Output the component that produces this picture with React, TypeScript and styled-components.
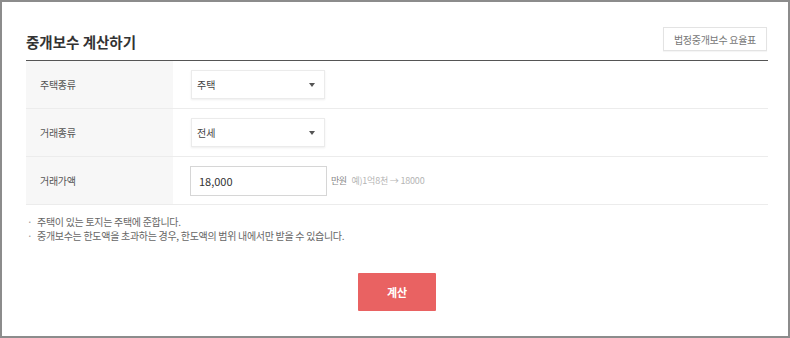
import styled, { createGlobalStyle } from "styled-components";

const GlobalStyle = createGlobalStyle`
  html, body {
    margin: 0;
    padding: 0;
    background: #ffffff;
  }
  body {
    font-family: "Noto Sans CJK KR", "Noto Sans", sans-serif;
    color: #333;
  }
`;

const StyledFrame = styled.div`
  box-sizing: border-box;
  width: 790px;
  height: 338px;
  border: 2px solid #8c8c8c;
  padding: 0 20px 0 24px;
  background: #ffffff;
`;

const StyledHeader = styled.div`
  display: flex;
  justify-content: space-between;
  align-items: flex-end;
  height: 59px;
  padding-bottom: 9px;
  box-sizing: border-box;
  border-bottom: 1px solid #555;
`;

const StyledTitle = styled.h2`
  margin: 0 0 -1px 0;
  font-size: 14.5px;
  font-weight: 700;
  line-height: 20px;
  color: #333;
`;

const StyledRateButton = styled.button`
  box-sizing: border-box;
  width: 104px;
  height: 24px;
  border: 1px solid #e3e3e3;
  background: #fff;
  color: #777;
  font-family: inherit;
  font-size: 10px;
  letter-spacing: -0.3px;
  padding: 0;
  margin-right: 1px;
  box-shadow: 0 1px 1px rgba(0, 0, 0, 0.04);
`;

const StyledRow = styled.div`
  display: flex;
  height: 48px;
  box-sizing: border-box;
  border-bottom: 1px solid #ececec;
`;

const StyledLabel = styled.div`
  display: flex;
  align-items: center;
  width: 147px;
  padding-left: 14px;
  box-sizing: border-box;
  background: #f7f7f7;
  font-size: 10px;
  letter-spacing: -0.3px;
  color: #555;
`;

const StyledValue = styled.div`
  display: flex;
  align-items: center;
  padding-left: 17px;
`;

const StyledSelect = styled.div`
  display: flex;
  align-items: center;
  justify-content: space-between;
  box-sizing: border-box;
  width: 134px;
  height: 29px;
  margin-left: 1px;
  padding: 0 9px 0 5px;
  border: 1px solid #ebebeb;
  box-shadow: 0 1px 2px rgba(0, 0, 0, 0.07);
  background: #fff;
  font-size: 10px;
  color: #444;
`;

const StyledCaret = styled.span`
  width: 0;
  height: 0;
  border-left: 3px solid transparent;
  border-right: 3px solid transparent;
  border-top: 4px solid #555;
`;

const StyledInput = styled.div`
  display: flex;
  align-items: center;
  box-sizing: border-box;
  width: 137px;
  height: 30px;
  padding-left: 8px;
  border: 1px solid #d6d6d6;
  background: #fff;
  font-size: 11px;
  color: #333;
`;

const StyledUnit = styled.span`
  font-size: 9px;
  color: #888;
  letter-spacing: -0.6px;
  margin-left: 4px;
`;

const StyledHint = styled.span`
  font-size: 9px;
  color: #b5b5b5;
  letter-spacing: -0.2px;
  margin-left: 5px;
`;

const StyledNotes = styled.ul`
  list-style: none;
  margin: 0;
  padding: 10px 0 0 0;
`;

const StyledNote = styled.li`
  display: flex;
  font-size: 10px;
  line-height: 14px;
  color: #666;
  letter-spacing: -0.3px;

  &::before {
    content: "·";
    width: 10px;
    margin-left: 1px;
    color: #999;
  }
`;

const StyledActions = styled.div`
  display: flex;
  justify-content: center;
  padding-top: 30px;
`;

const StyledCalcButton = styled.button`
  width: 78px;
  height: 38px;
  border: 0;
  border-radius: 1px;
  background: #e96262;
  color: #fff;
  font-family: inherit;
  font-size: 11px;
  font-weight: 700;
  padding: 0;
`;

const rows = [
  { label: "주택종류", value: "주택" },
  { label: "거래종류", value: "전세" },
];

export default function App() {
  return (
    <>
      <GlobalStyle />
      <StyledFrame>
        <StyledHeader>
          <StyledTitle>중개보수 계산하기</StyledTitle>
          <StyledRateButton>법정중개보수 요율표</StyledRateButton>
        </StyledHeader>

        {rows.map((row) => (
          <StyledRow key={row.label}>
            <StyledLabel>{row.label}</StyledLabel>
            <StyledValue>
              <StyledSelect>
                {row.value}
                <StyledCaret />
              </StyledSelect>
            </StyledValue>
          </StyledRow>
        ))}
        <StyledRow>
          <StyledLabel>거래가액</StyledLabel>
          <StyledValue>
            <StyledInput>18,000</StyledInput>
            <StyledUnit>만원</StyledUnit>
            <StyledHint>예)1억8천 → 18000</StyledHint>
          </StyledValue>
        </StyledRow>

        <StyledNotes>
          <StyledNote>주택이 있는 토지는 주택에 준합니다.</StyledNote>
          <StyledNote>
            중개보수는 한도액을 초과하는 경우, 한도액의 범위 내에서만 받을 수 있습니다.
          </StyledNote>
        </StyledNotes>

        <StyledActions>
          <StyledCalcButton>계산</StyledCalcButton>
        </StyledActions>
      </StyledFrame>
    </>
  );
}
